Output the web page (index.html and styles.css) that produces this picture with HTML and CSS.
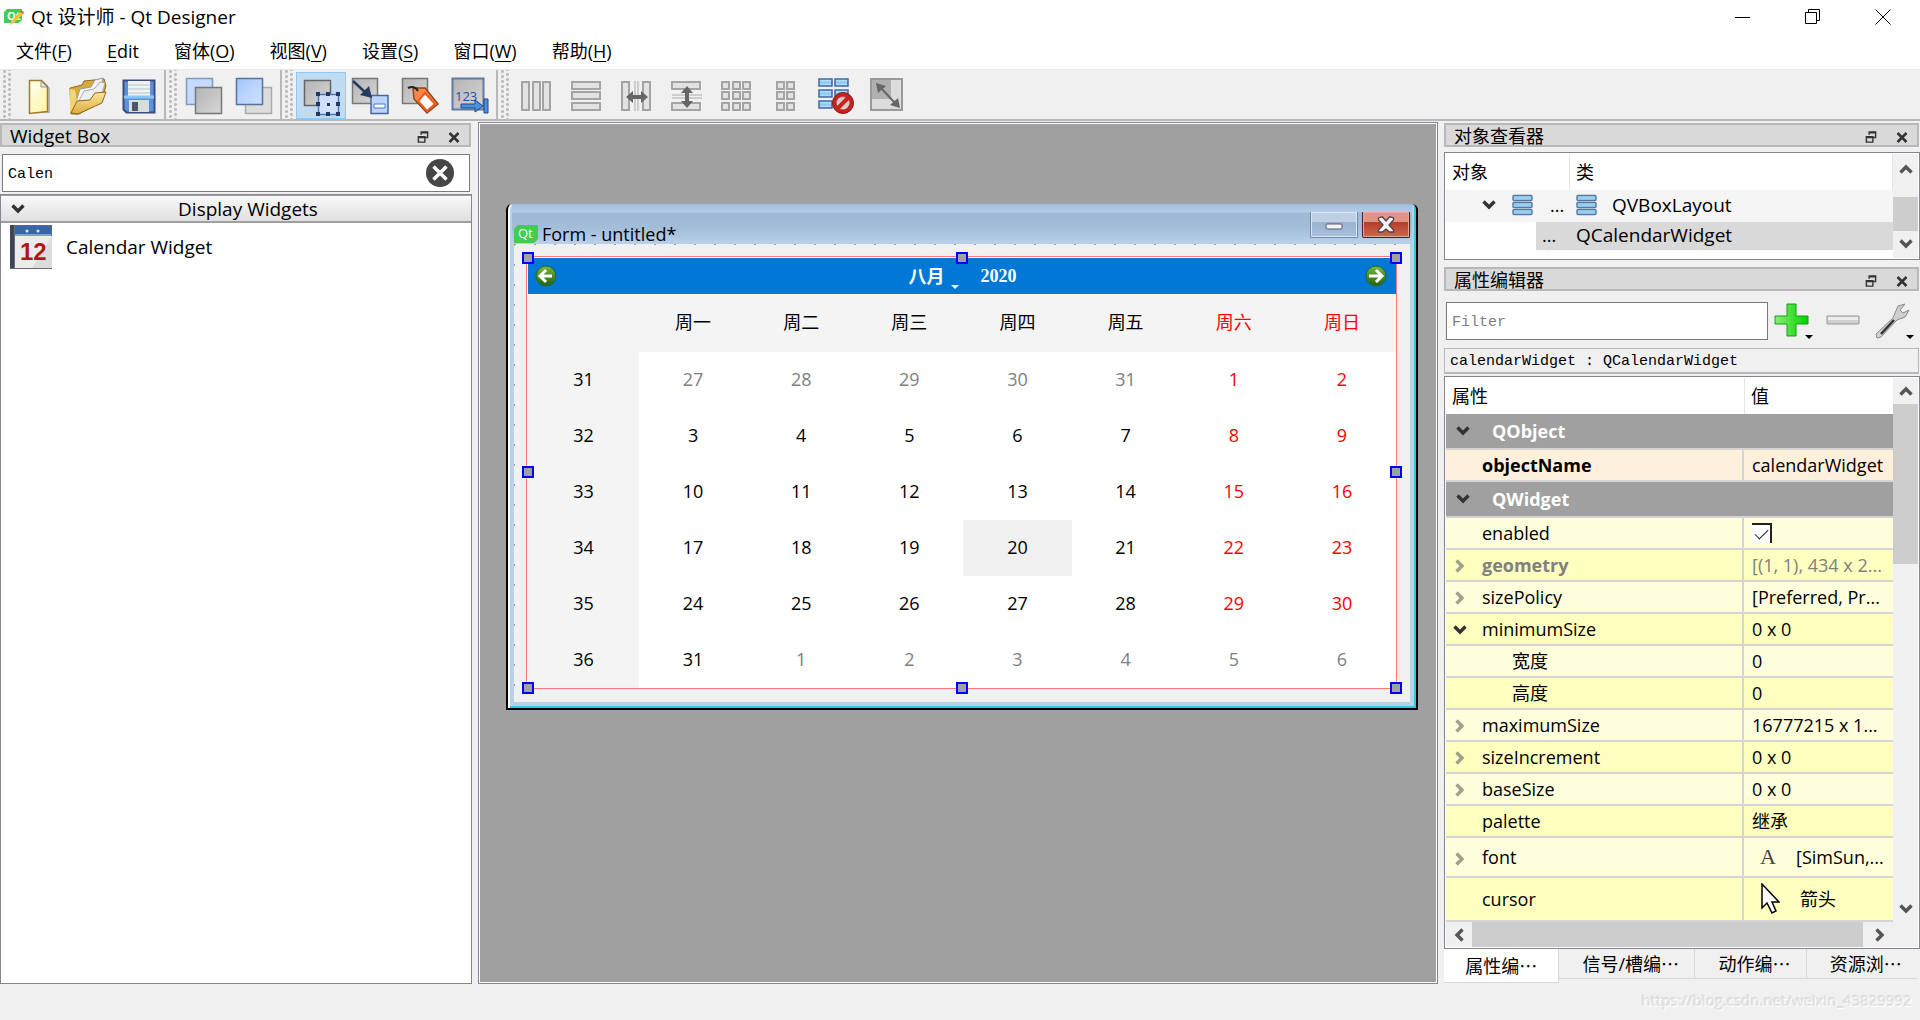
FILE: index.html
```html
<!DOCTYPE html>
<html lang="zh-CN">
<head>
<meta charset="utf-8">
<title>Qt 设计师 - Qt Designer</title>
<link rel="stylesheet" href="styles.css">
</head>
<body>
<svg class="defs" width="0" height="0" aria-hidden="true">
  <defs>
    <linearGradient id="gray" x1="0" y1="0" x2="1" y2="1"><stop offset="0" stop-color="#b4b4b4"/><stop offset="1" stop-color="#d6d6d6"/></linearGradient>
    <linearGradient id="blue" x1="0" y1="0" x2="1" y2="1"><stop offset="0" stop-color="#a4c6fc"/><stop offset="1" stop-color="#d0e2ff"/></linearGradient>
    <linearGradient id="bar" x1="0" y1="0" x2="0" y2="1"><stop offset="0" stop-color="#c8ecff"/><stop offset=".5" stop-color="#8cc8f0"/><stop offset="1" stop-color="#c4e4fa"/></linearGradient>
    <linearGradient id="paper" x1="0" y1="0" x2="1" y2="1"><stop offset="0" stop-color="#fffef0"/><stop offset="1" stop-color="#fff6a0"/></linearGradient>
    <linearGradient id="gold" x1="0" y1="0" x2="0" y2="1"><stop offset="0" stop-color="#fbe5a0"/><stop offset="1" stop-color="#dcae3c"/></linearGradient>
    <linearGradient id="green" x1="0" y1="0" x2="0" y2="1"><stop offset="0" stop-color="#7cb840"/><stop offset="1" stop-color="#1f6310"/></linearGradient>
    <linearGradient id="plus" x1="0" y1="0" x2="1" y2="0"><stop offset="0" stop-color="#8af078"/><stop offset=".5" stop-color="#44e038"/><stop offset="1" stop-color="#00d000"/></linearGradient>
    <symbol id="float" viewBox="0 0 12 14"><path d="M4 4V1h7v6H8M4 2h7" fill="none" stroke="#333" stroke-width="1.500"/><path d="M1 6h7v6H1zM1 7h7" fill="none" stroke="#333" stroke-width="1.500"/></symbol>
    <symbol id="cross" viewBox="0 0 12 12"><path d="M1.500 1.500l9 9M10.500 1.500l-9 9" fill="none" stroke="#333" stroke-width="2.600"/></symbol>
    <symbol id="chevron" viewBox="0 0 14 10"><path d="M1.500 1.500L7 7l5.500-5.500" fill="none" stroke="currentColor" stroke-width="3.400"/></symbol>
    <symbol id="vbox" viewBox="0 0 22 22"><g fill="url(#bar)" stroke="#5078a0" stroke-width="1.400"><rect x="1" y="1.500" width="19" height="5" rx="1"/><rect x="1" y="8.500" width="19" height="5" rx="1"/><rect x="1" y="15.500" width="19" height="5" rx="1"/></g></symbol>
  </defs>
</svg>
<div class="app">
  <header class="titlebar">
    <svg class="app-logo" viewBox="0 0 20 20"><path d="M3 2h15v11l-3 3H0V5z" fill="#41cd52"/><text x="3" y="13" font-size="11" font-weight="bold" fill="#fff" class="logo-text">Qt</text><path d="M6 18l2-5 9-9 3 2-10 10z" fill="#f4c430"/><path d="M6 18l2-5 2 3z" fill="#e8c8a0"/><path d="M16 5l1-2 3 2-1 2z" fill="#e06050"/></svg>
    <h1>Qt 设计师 - Qt Designer</h1>
    <div class="window-buttons">
      <button aria-label="最小化"><svg viewBox="0 0 16 16"><path d="M0 8.500h15" stroke="#000" fill="none"/></svg></button>
      <button aria-label="还原"><svg viewBox="0 0 16 16"><path d="M3.500 3.500v-3h11v11h-3M.500 3.500h11v11H.500z" stroke="#000" fill="none"/></svg></button>
      <button aria-label="关闭"><svg viewBox="0 0 16 16"><path d="M.500 .500l15 15M15.500 .500l-15 15" stroke="#000" fill="none"/></svg></button>
    </div>
  </header>
  <nav class="menubar">
    <button>文件(<u>F</u>)</button><button><u>E</u>dit</button><button>窗体(<u>O</u>)</button><button>视图(<u>V</u>)</button><button>设置(<u>S</u>)</button><button>窗口(<u>W</u>)</button><button>帮助(<u>H</u>)</button>
  </nav>
  <div class="toolbars">
    <div class="toolbar">
      <button aria-label="新建"><svg viewBox="0 0 50 47"><path d="M17 10h13l6 6v25H17z" fill="#888" opacity=".5"/><path d="M15.500 8.500h12l6 6v25l-18 2z" fill="url(#paper)" stroke="#a07c28" stroke-width="1.500"/><path d="M27 9v6h6z" fill="#e8e8e8" stroke="#999"/></svg></button>
      <button aria-label="打开"><svg viewBox="0 0 50 47"><path d="M6 16l12-3 2-4 20-2 2 7-5 16-22 12H7z" fill="#d9a93a" stroke="#8d6a1c"/><path d="M12 30l4-13 11-2 4-7 8-2-3 14-22 12z" fill="#f6f6f6" stroke="#999"/><path d="M14 31l6-12 10-2 6-7 5 1-4 14-22 14z" fill="#eee" stroke="#aaa"/><path d="M6 17l5 1 2 11-4 12-3-1z" fill="#f3d27c"/><path d="M7 41l6-12 13-1 5-7 11-1-4 11-24 11z" fill="url(#gold)" stroke="#8d6a1c"/></svg></button>
      <button aria-label="保存"><svg viewBox="0 0 50 47"><path d="M9.500 8.500h31v32h-28l-3-3z" fill="#5b93d8" stroke="#3a4c80" stroke-width="2"/><path d="M14 9h22v15H14z" fill="#f0f3f4"/><path d="M14 13h22M14 17h22M14 21h22" stroke="#b4c4cc"/><path d="M10 25h30" stroke="#8cc4f8" stroke-width="3"/><path d="M15 28h20v12H15z" fill="#d9dcdc"/><path d="M18 30h6v9h-6z" fill="#4c5560"/></svg></button>
    </div>
    <div class="toolbar">
      <button aria-label="置后"><svg viewBox="0 0 50 47"><path d="M6.500 6.500h26v26h-26z" fill="#c5daff" stroke="#7f97bd" stroke-width="1.500"/><path d="M15.500 15.500h26v26h-26z" fill="url(#gray)" stroke="#777" stroke-width="1.500"/></svg></button>
      <button aria-label="置前"><svg viewBox="0 0 50 47"><path d="M15.500 15.500h26v26h-26z" fill="#dcdcdc" stroke="#aaa" stroke-width="1.500"/><path d="M6.500 6.500h26v26h-26z" fill="url(#blue)" stroke="#54709c" stroke-width="1.500"/></svg></button>
    </div>
    <div class="toolbar">
      <button class="active" aria-label="编辑控件"><svg viewBox="0 0 50 47"><path d="M8.500 8.500h26v25h-26z" fill="url(#gray)" stroke="#666" stroke-width="1.500"/><path d="M22.500 22.500h20v20h-20z" fill="#cfe1ff" stroke="#5575b0" stroke-width="1.500"/><path d="M20 20h4v4h-4zM30 20h4v4h-4zM40 20h4v4h-4zM20 30h4v4h-4zM40 30h4v4h-4zM20 40h4v4h-4zM30 40h4v4h-4zM40 40h4v4h-4zM31 31h3v3h-3z" fill="#1f3666"/></svg></button>
      <button aria-label="编辑信号/槽"><svg viewBox="0 0 50 47"><path d="M6.500 6.500h25v25h-25z" fill="url(#gray)" stroke="#777" stroke-width="1.500"/><path d="M25 23.500h17v18H25z" fill="#bcd5ff" stroke="#4668a0" stroke-width="1.500"/><path d="M28 32h11v4H28z" fill="#fff" stroke="#4a78c8"/><path d="M7 9l13 12" stroke="#253c60" stroke-width="2.500"/><path d="M26 26l-12-3 9-9z" fill="#253c60"/></svg></button>
      <button aria-label="编辑伙伴"><svg viewBox="0 0 50 47"><path d="M6.500 6.500h25v25h-25z" fill="url(#gray)" stroke="#777" stroke-width="1.500"/><path d="M17 16l12 0 13 16-11 9-13-14z" fill="#ff8648" stroke="#8c4620" stroke-width="1.500"/><path d="M29 21l10 11-8 7-9-10z" fill="#fff" stroke="#f05a18" stroke-width="2"/><path d="M12 16c4-2 8-1 10 3" fill="none" stroke="#222" stroke-width="2"/></svg></button>
      <button aria-label="编辑 Tab 顺序"><svg viewBox="0 0 50 47"><path d="M6.500 6.500h31v31h-31z" fill="url(#gray)" stroke="#5f79a4" stroke-width="2"/><text x="9" y="29" font-size="13" fill="#1e54a0" class="logo-text">123</text><path d="M15 32h14v-4l8 6-8 6v-4H15zM38 27h4v14h-4z" fill="#4a90e0" stroke="#1c4a88"/></svg></button>
    </div>
    <div class="toolbar grow">
      <button aria-label="水平布局"><svg viewBox="0 0 50 47"><g class="cell"><rect x="10" y="10" width="7" height="28"/><rect x="21" y="10" width="7" height="28"/><rect x="31" y="10" width="7" height="28"/></g></svg></button>
      <button aria-label="垂直布局"><svg viewBox="0 0 50 47"><g class="cell"><rect x="10" y="10" width="28" height="7"/><rect x="10" y="20" width="28" height="7"/><rect x="10" y="31" width="28" height="7"/></g></svg></button>
      <button aria-label="水平拆分器"><svg viewBox="0 0 50 47"><g class="cell"><rect x="10" y="10" width="7" height="28"/><rect x="31" y="10" width="7" height="28"/></g><path d="M23 9v30M26 9v30" stroke="#aaa"/><path d="M14 25l7-6v4h8v-4l7 6-7 6v-4h-8v4z" fill="#666"/></svg></button>
      <button aria-label="垂直拆分器"><svg viewBox="0 0 50 47"><g class="cell"><rect x="10" y="10" width="28" height="7"/><rect x="10" y="31" width="28" height="7"/></g><path d="M10 23h30M10 26h30" stroke="#aaa"/><path d="M25 14l6 7h-4v8h4l-6 7-6-7h4v-8h-4z" fill="#666"/></svg></button>
      <button aria-label="栅格布局"><svg viewBox="0 0 50 47"><g class="cell"><rect x="10" y="10" width="7" height="7"/><rect x="21" y="10" width="7" height="7"/><rect x="31" y="10" width="7" height="7"/><rect x="10" y="20" width="7" height="7"/><rect x="21" y="20" width="7" height="7"/><rect x="31" y="20" width="7" height="7"/><rect x="10" y="31" width="7" height="7"/><rect x="21" y="31" width="7" height="7"/><rect x="31" y="31" width="7" height="7"/></g></svg></button>
      <button aria-label="表单布局"><svg viewBox="0 0 50 47"><g class="cell"><rect x="15" y="10" width="7" height="7"/><rect x="25" y="10" width="7" height="7"/><rect x="15" y="20" width="7" height="7"/><rect x="25" y="20" width="7" height="7"/><rect x="15" y="31" width="7" height="7"/><rect x="25" y="31" width="7" height="7"/></g></svg></button>
      <button aria-label="打破布局"><svg viewBox="0 0 50 47"><g fill="url(#bar)" stroke="#3c68a4" stroke-width="1.500"><rect x="7" y="7" width="13" height="7"/><rect x="23" y="7" width="13" height="7"/><rect x="7" y="18" width="13" height="7"/><rect x="23" y="18" width="13" height="7"/><rect x="7" y="29" width="13" height="7"/></g><circle cx="31" cy="31" r="8.500" fill="#d8b8b8" fill-opacity=".7" stroke="#c42420" stroke-width="4"/><circle cx="31" cy="31" r="10.500" fill="none" stroke="#8c1818"/><path d="M25 37l12-12" stroke="#c42420" stroke-width="4"/></svg></button>
      <button aria-label="调整大小"><svg viewBox="0 0 50 47"><path d="M9 7h31v31H9z" fill="#dcdcdc" stroke="#999" stroke-width="2"/><path d="M10 8h19v19H10z" fill="#b0b0b0"/><path d="M17 14l17 18" stroke="#666" stroke-width="2"/><path d="M14 11l10 3-8 7zM38 36l-10-3 8-7z" fill="#666"/></svg></button>
    </div>
  </div>

  <main class="workspace">
    <section class="dock">
      <header class="dock-title"><h2>Widget Box</h2><button aria-label="浮动"><svg><use href="#float"/></svg></button><button aria-label="关闭"><svg><use href="#cross"/></svg></button></header>
      <div class="search">
        <input type="text" value="Calen" aria-label="过滤控件">
        <button aria-label="清除"><svg viewBox="0 0 28 28"><circle cx="14" cy="14" r="14" fill="#464646"/><path d="M7.500 7.500l13 13M20.500 7.500l-13 13" stroke="#fff" stroke-width="3.500"/></svg></button>
      </div>
      <div class="widget-list">
        <button class="category"><svg class="chev"><use href="#chevron"/></svg><span>Display Widgets</span></button>
        <div class="widget-item">
          <svg class="cal-icon" viewBox="0 0 44 44"><path d="M0 0h42v44H0z" fill="#6a6a6a"/><path d="M0 0h4v43H0z" fill="#3c4656"/><path d="M5 11h37v32H5z" fill="#ececec"/><path d="M5 1h36v10H5z" fill="#3666b0"/><path d="M5 9h36v2H5z" fill="#7ca0d0"/><circle cx="17" cy="6" r="1.500" fill="#dce8f8"/><circle cx="28" cy="6" r="1.500" fill="#dce8f8"/><path d="M42 11v32H22z" fill="#ccc" opacity=".5"/><text x="10" y="35" font-size="24" font-weight="bold" fill="#b01818" class="cal-number">12</text></svg>
          <span>Calendar Widget</span>
        </div>
      </div>
    </section>

    <section class="mdi">
      <div class="subwindow">
        <div class="sub-title">
          <svg class="qt-logo" viewBox="0 0 24 18"><path d="M4 0h20v14l-4 4H0V4z" fill="#41cd52"/><text x="4" y="13" font-size="13" fill="#fff" class="logo-text">Qt</text></svg>
          <span>Form - untitled*</span>
          <button class="sub-min" aria-label="最小化"><svg viewBox="0 0 18 18"><rect x="1" y="8" width="16" height="5" rx="1" fill="#f4f4f4" stroke="#4c5870"/></svg></button>
          <button class="sub-close" aria-label="关闭"><svg viewBox="0 0 18 18"><path d="M1.500 2l3-1h1L9 5l3.500-4h1l3 1v2L12 9l4.500 5v2h-4L9 13l-3.500 3h-4v-2L6 9 1.500 4z" fill="#f4f4f4" stroke="#504050" stroke-width="1.300"/></svg></button>
        </div>
        <div class="form">
          <div class="calendar">
            <div class="cal-nav">
              <button aria-label="上个月"><svg viewBox="0 0 22 22"><circle cx="11" cy="11" r="10" fill="url(#green)" stroke="#2a6a20"/><path d="M17 11H6M11 5l-6 6 6 6" fill="none" stroke="#fff" stroke-width="3"/></svg></button>
              <div class="cal-date"><button class="month">八月</button><button class="year">2020</button></div>
              <button aria-label="下个月"><svg viewBox="0 0 22 22"><circle cx="11" cy="11" r="10" fill="url(#green)" stroke="#2a6a20"/><path d="M4 11h11M11 5l6 6-6 6" fill="none" stroke="#fff" stroke-width="3"/></svg></button>
            </div>
            <table class="month-grid">
              <colgroup><col class="week-col"><col span="7"></colgroup>
              <thead><tr><th></th><th>周一</th><th>周二</th><th>周三</th><th>周四</th><th>周五</th><th class="we">周六</th><th class="we">周日</th></tr></thead>
              <tbody>
                <tr><th>31</th><td class="out">27</td><td class="out">28</td><td class="out">29</td><td class="out">30</td><td class="out">31</td><td class="we">1</td><td class="we">2</td></tr>
                <tr><th>32</th><td>3</td><td>4</td><td>5</td><td>6</td><td>7</td><td class="we">8</td><td class="we">9</td></tr>
                <tr><th>33</th><td>10</td><td>11</td><td>12</td><td>13</td><td>14</td><td class="we">15</td><td class="we">16</td></tr>
                <tr><th>34</th><td>17</td><td>18</td><td>19</td><td class="today">20</td><td>21</td><td class="we">22</td><td class="we">23</td></tr>
                <tr><th>35</th><td>24</td><td>25</td><td>26</td><td>27</td><td>28</td><td class="we">29</td><td class="we">30</td></tr>
                <tr><th>36</th><td>31</td><td class="out">1</td><td class="out">2</td><td class="out">3</td><td class="out">4</td><td class="out">5</td><td class="out">6</td></tr>
              </tbody>
            </table>
            <i class="grip top left"></i><i class="grip top center"></i><i class="grip top right"></i>
            <i class="grip middle left"></i><i class="grip middle right"></i>
            <i class="grip bottom left"></i><i class="grip bottom center"></i><i class="grip bottom right"></i>
          </div>
        </div>
      </div>
    </section>

    <aside class="side">
      <header class="dock-title"><h2>对象查看器</h2><button aria-label="浮动"><svg><use href="#float"/></svg></button><button aria-label="关闭"><svg><use href="#cross"/></svg></button></header>
      <div class="tree frame">
        <table>
          <colgroup><col class="obj-col"><col></colgroup>
          <thead><tr><th>对象</th><th>类</th></tr></thead>
          <tbody>
            <tr class="layout-row"><td><div><svg class="chev"><use href="#chevron"/></svg><svg class="vbox"><use href="#vbox"/></svg><span>...</span></div></td><td><div><svg class="vbox"><use href="#vbox"/></svg><span>QVBoxLayout</span></div></td></tr>
            <tr class="selected"><td><div><span>...</span></div></td><td>QCalendarWidget</td></tr>
          </tbody>
        </table>
        <div class="vscroll"><button aria-label="向上"><svg class="up"><use href="#chevron"/></svg></button><div class="track"><div class="thumb"></div></div><button aria-label="向下"><svg><use href="#chevron"/></svg></button></div>
      </div>
      <header class="dock-title second"><h2>属性编辑器</h2><button aria-label="浮动"><svg><use href="#float"/></svg></button><button aria-label="关闭"><svg><use href="#cross"/></svg></button></header>
      <div class="filter-row">
        <input type="text" placeholder="Filter" aria-label="Filter">
        <button aria-label="添加动态属性"><svg viewBox="0 0 40 40"><path d="M14 3h9v12h12v8H23v12h-9V23H2v-8h12z" fill="url(#plus)" stroke="#10a010"/><path d="M32 34h8l-4 4z" fill="#000"/></svg></button>
        <button aria-label="删除动态属性"><svg viewBox="0 0 40 40"><path d="M4 15h32v8H4z" fill="#d0d0d0" stroke="#999"/><path d="M5 16h30v3H5z" fill="#eee"/></svg></button>
        <button aria-label="配置"><svg viewBox="0 0 40 40"><path d="M22 12l-2 5L3 33l1 4 4-1 16-17 8-3 4-7-6 3-3-3 5-6-7 2z" fill="#d0d0d0" stroke="#8a8a8a"/><path d="M21 19L8 33" stroke="#333" stroke-width="2.500"/><path d="M33 34h8l-4 4z" fill="#000"/></svg></button>
      </div>
      <div class="object-label">calendarWidget : QCalendarWidget</div>
      <div class="props frame">
        <div class="props-body">
          <table>
            <colgroup><col class="name-col"><col></colgroup>
            <thead><tr><th>属性</th><th>值</th></tr></thead>
            <tbody>
              <tr class="group"><td colspan="2"><div><svg class="chev"><use href="#chevron"/></svg>QObject</div></td></tr>
              <tr class="peach"><td><b>objectName</b></td><td>calendarWidget</td></tr>
              <tr class="group"><td colspan="2"><div><svg class="chev"><use href="#chevron"/></svg>QWidget</div></td></tr>
              <tr><td><label for="enabled">enabled</label></td><td><input id="enabled" type="checkbox" checked></td></tr>
              <tr class="alt dim"><td class="closed"><svg class="chev"><use href="#chevron"/></svg><b>geometry</b></td><td>[(1, 1), 434 x 2...</td></tr>
              <tr><td class="closed"><svg class="chev"><use href="#chevron"/></svg>sizePolicy</td><td>[Preferred, Pr...</td></tr>
              <tr class="alt"><td class="open"><svg class="chev"><use href="#chevron"/></svg>minimumSize</td><td>0 x 0</td></tr>
              <tr><td class="child">宽度</td><td>0</td></tr>
              <tr class="alt"><td class="child">高度</td><td>0</td></tr>
              <tr><td class="closed"><svg class="chev"><use href="#chevron"/></svg>maximumSize</td><td>16777215 x 1...</td></tr>
              <tr class="alt"><td class="closed"><svg class="chev"><use href="#chevron"/></svg>sizeIncrement</td><td>0 x 0</td></tr>
              <tr><td class="closed"><svg class="chev"><use href="#chevron"/></svg>baseSize</td><td>0 x 0</td></tr>
              <tr class="alt"><td>palette</td><td>继承</td></tr>
              <tr class="font-row"><td class="closed"><svg class="chev"><use href="#chevron"/></svg>font</td><td><div class="with-icon"><span class="glyph">A</span><span>[SimSun,...</span></div></td></tr>
              <tr class="alt cursor-row"><td>cursor</td><td><div class="with-icon"><svg class="arrow" viewBox="0 0 20 32"><path d="M2 1v24l5-5 5 10 4-2-4-9h7z" fill="#fff" stroke="#000" stroke-width="1.500"/></svg><span>箭头</span></div></td></tr>
            </tbody>
          </table>
          <div class="hscroll"><button aria-label="向左"><svg class="lt"><use href="#chevron"/></svg></button><div class="track"><div class="thumb"></div></div><button aria-label="向右"><svg class="rt"><use href="#chevron"/></svg></button></div>
        </div>
        <div class="vscroll"><button aria-label="向上"><svg class="up"><use href="#chevron"/></svg></button><div class="track"><div class="thumb"></div></div><button aria-label="向下"><svg><use href="#chevron"/></svg></button></div>
      </div>
      <div class="tabs" role="tablist"><button role="tab" class="current">属性编⋯</button><button role="tab">信号/槽编⋯</button><button role="tab">动作编⋯</button><button role="tab">资源浏⋯</button></div>
    </aside>
  </main>
  <footer class="statusbar">https://blog.csdn.net/weixin_43829992</footer>
</div>
</body>
</html>
```
FILE: styles.css
```css
* { box-sizing: border-box; }
body { margin: 0; background: #f0f0f0; color: #000; font: 18px/24px "Open Sans", "Noto Sans CJK SC", sans-serif; }
button { margin: 0; padding: 0; border: 0; background: none; color: inherit; font: inherit; }
input { font: inherit; }
svg { display: block; flex: none; }
h1, h2 { margin: 0; font: inherit; }
table { border-collapse: separate; border-spacing: 0; table-layout: fixed; width: 100%; }
th { font-weight: normal; }
td, th { padding: 0; white-space: nowrap; }
.defs { position: absolute; }
.logo-text { font-family: "Open Sans", sans-serif; }
.cal-number { font-family: "Liberation Sans", sans-serif; }

.app { display: flex; flex-direction: column; min-height: 100vh; }

/* title and menu */
.titlebar { display: flex; align-items: center; height: 34px; padding: 0 2px 0 4px; background: #fff; }
.app-logo { width: 20px; height: 20px; margin-right: 7px; }
.titlebar h1 { flex: 1; font-size: 19px; }
.window-buttons { display: flex; }
.window-buttons button { display: grid; place-items: center; width: 70px; height: 34px; }
.window-buttons svg { width: 16px; height: 16px; }
.menubar { display: flex; gap: 3px; height: 36px; background: #fff; border-bottom: 1px solid #e8e8e8; }
.menubar button { padding: 0 16px 2px; }
.menubar u { text-underline-offset: 3px; }

/* toolbars */
.toolbars { display: flex; height: 51px; }
.toolbar { display: flex; padding: 2px 0 0 14px; border-right: 2px solid #b8b8b8; border-bottom: 2px solid #b8b8b8;
  background: radial-gradient(circle, #bbb 1px, transparent 2px) 2px 4px / 5px 5px repeat-y, radial-gradient(circle, #bbb 1px, transparent 2px) 7px 2px / 5px 5px repeat-y; }
.toolbar.grow { flex: 1; border-right: 0; }
.toolbar button { width: 50px; height: 47px; }
.toolbar svg { width: 50px; height: 47px; }
.toolbar .active { background: #c0dcf3; box-shadow: inset 0 0 0 1px #90c8f6; }
.cell rect { fill: #e2e2e2; stroke: #a4a4a4; stroke-width: 2px; }

/* docks */
.workspace { flex: 1; display: grid; grid-template-columns: 472px minmax(0, 1fr) 476px; gap: 6px; padding-top: 1px; }
.dock, .side { display: flex; flex-direction: column; }
.dock-title { display: flex; align-items: center; height: 24px; margin: 1px 1px 0 0; padding: 2px 0 0 8px; border: 2px solid #b8b8b8; background: #d9d9d9; }
.dock-title h2 { flex: 1; }
.dock .dock-title h2 { font-size: 19px; }
.dock-title button { display: grid; place-items: center; width: 31px; height: 20px; padding-top: 2px; }
.dock-title svg { width: 12px; height: 13px; }
.search { display: flex; align-items: center; height: 38px; margin: 7px 2px 2px; border: 1px solid #7a7a7a; background: #fff; }
.search input { flex: 1; min-width: 0; border: 0; outline: 0; padding: 4px 5px 0; background: none; font: 15px/24px "Liberation Mono", monospace; }
.search button { padding-right: 15px; }
.search svg { width: 28px; height: 28px; }
.widget-list { flex: 1; border: 1px solid #828790; background: #fff; }
.category { position: relative; display: flex; align-items: center; width: 100%; height: 28px; padding: 0 0 0 10px; border-top: 1px solid #a0a0a0; border-bottom: 2px solid #a0a0a0; background: linear-gradient(#f8f8f8, #e0e0e0); font-size: 19px; }
.category span { flex: 1; text-align: center; }
.chev { width: 14px; height: 10px; color: #333; }
.widget-item { display: flex; align-items: center; gap: 12px; padding: 2px 9px; font-size: 19px; }
.cal-icon { width: 44px; height: 44px; }

/* form canvas */
.mdi { position: relative; border: 1px solid #828790; outline: 1px solid #fff; outline-offset: -2px; background: #a0a0a0; overflow: hidden; }
.subwindow { position: absolute; left: 27px; top: 81px; width: 912px; border: solid #000; border-width: 0 2px 2px; border-radius: 6px 6px 0 0; background: #b9d1ea; box-shadow: inset 2px 0 #fff, inset -2px -2px #30c8e0; padding: 0 6px 6px; }
.sub-title { display: flex; align-items: flex-end; height: 40px; margin: 0 -2px; padding: 0 2px; background: linear-gradient(#a0bcda 0, #b4cce6 8px, #9fbad6 9px, #a4bdd9 24px, #b9d1ea 40px); }
.sub-title span { flex: 1; height: 22px; padding-left: 4px; }
.qt-logo { width: 24px; height: 18px; margin-bottom: 1px; overflow: visible; }
.sub-title button { display: grid; place-items: center; align-self: center; width: 48px; height: 26px; margin-left: 4px; margin-top: 2px; border: 1px solid #6f87a8; border-top: 0; border-radius: 0 0 2px 2px; box-shadow: inset 0 0 0 1px #dbe8f6; }
.sub-title button svg { width: 18px; height: 18px; }
.sub-min { background: linear-gradient(#bdd0e6 40%, #9ab2cf 41%, #a8c0dc); }
.sub-title .sub-close { border-color: #501820; box-shadow: inset 0 0 0 1px #e8a898; background: linear-gradient(#e09488 40%, #b83c28 41%, #cc6850); }
.form { padding: 12px 13px 13px 12px; background: linear-gradient(90deg, transparent 18px, #a0a0a0 18px) 2px 0 / 20px 1px repeat-x, linear-gradient(transparent 18px, #a0a0a0 18px) 0 2px / 1px 20px repeat-y, #f0f0f0; }
.calendar { position: relative; padding: 1px 0 0 1px; border: 1px solid #ff7878; background: #fff; }
.cal-nav { display: flex; align-items: center; height: 36px; padding: 0 9px 0 7px; background: #0078d7; color: #fff; font-weight: bold; }
.cal-nav svg { width: 22px; height: 22px; }
.cal-date { flex: 1; display: flex; justify-content: center; gap: 36px; padding-left: 3px; }
.month { position: relative; }
.month::after { content: ""; position: absolute; right: -14px; bottom: -1px; border: 4px solid transparent; border-top-color: #fff; border-bottom: 0; }
.year { font-family: "Liberation Serif", serif; }
.month-grid { text-align: center; }
.week-col { width: 111px; }
.month-grid th, .month-grid td { height: 56px; padding-bottom: 2px; }
.month-grid th { background: #f4f4f4; }
.month-grid thead th { height: 58px; padding-bottom: 3px; }
.month-grid .we { color: #f00; }
.month-grid .out { color: #808080; }
.month-grid .today { background: #f0f0f0; }
.grip { position: absolute; width: 12px; height: 12px; border: 2px solid #00f; background: #a0a0a0; }
.grip.top { top: -5px; } .grip.middle { top: calc(50% - 7px); } .grip.bottom { bottom: -6px; }
.grip.left { left: -5px; } .grip.center { left: calc(50% - 6px); } .grip.right { right: -6px; }

/* shared list chrome */
.frame { display: flex; border: 1px solid #828790; background: #fff; padding: 1px; }
.vscroll { display: flex; flex: none; flex-direction: column; width: 25px; background: #f0f0f0; }
.vscroll button, .hscroll button { display: grid; place-items: center; color: #555; }
.vscroll button { height: 26px; }
.vscroll svg, .hscroll svg { width: 14px; height: 10px; }
.vscroll .up { transform: rotate(180deg); }
.lt { transform: rotate(90deg); }
.rt { transform: rotate(-90deg); }
.track { flex: 1; }
.thumb { background: #cdcdcd; }

/* object inspector */
.tree { height: 108px; margin-top: 5px; }
.tree table { flex: 1; align-self: flex-start; }
.tree th { height: 36px; padding-left: 6px; border-right: 1px solid #e5e5e5; text-align: left; }
.obj-col { width: 124px; }
.tree td { height: 32px; padding: 0 0 2px 6px; }
.tree td:last-child { font-size: 19px; }
.tree td div { display: flex; align-items: center; }
.tree .layout-row td { background: #f5f5f5; }
.tree .layout-row td:first-child { padding-left: 36px; }
.layout-row td:first-child div { gap: 16px; }
.layout-row td:last-child div { gap: 14px; }
.vbox { width: 22px; height: 22px; }
.tree .selected td { height: 28px; background: #d9d9d9; }
.tree .selected td:first-child { padding-left: 96px; background: linear-gradient(90deg, #fff 90px, #d9d9d9 90px); }
.tree .vscroll button { height: 32px; }
.tree .vscroll button:last-child { height: 28px; }
.tree .thumb { height: 34px; margin-top: 12px; }

/* property editor */
.second { margin-top: 7px; }
.filter-row { display: flex; align-items: center; height: 38px; margin: 11px 2px 8px; }
.filter-row input { flex: 1; min-width: 0; height: 38px; padding: 2px 5px 0; border: 1px solid #7a7a7a; background: #fff; font: 15px/24px "Liberation Mono", monospace; }
.filter-row input::placeholder { color: #808080; }
.filter-row button { width: 50px; padding-left: 5px; }
.filter-row svg { width: 40px; height: 40px; overflow: visible; }
.object-label { height: 26px; margin: 0 1px 2px 0; padding-left: 5px; border: 1px solid #b8b8b8; border-bottom-width: 2px; font: 15px/26px "Liberation Mono", monospace; }
.props { flex: 1; }
.props-body { flex: 1; min-width: 0; display: flex; flex-direction: column; }
.props th { height: 36px; padding-left: 6px; text-align: left; }
.props th:last-child { border-left: 1px solid #e5e5e5; }
.name-col { width: 298px; }
.props td { position: relative; height: 32px; padding-left: 36px; border-bottom: 2px solid #d4d4d4; border-right: 2px solid #d4d4d4; background: #ffffdc; }
.props td:last-child { padding-left: 8px; border-right: 0; }
.props .alt td { background: #ffffbf; }
.props .peach td { background: #fff0dc; }
.props .dim { color: #808080; }
.props .group td { height: 36px; padding-left: 10px; background: #a0a0a0; color: #fff; font-weight: bold; }
.group div { display: flex; align-items: center; gap: 22px; }
.props td.child { padding-left: 66px; }
.props td > .chev { position: absolute; left: 7px; top: 11px; }
.props .closed .chev { color: #a0a08c; transform: rotate(-90deg); }
.props .font-row td { height: 40px; }
.font-row .closed > .chev { top: 16px; }
.props .cursor-row td { height: 44px; }
.with-icon { display: flex; align-items: center; gap: 20px; padding-left: 8px; }
.glyph { width: 16px; font-family: "Liberation Serif", serif; font-size: 22px; color: #444; }
.arrow { width: 20px; height: 32px; }
.props input { appearance: none; display: block; width: 20px; height: 20px; margin: 0; background: #fff; border-top: 2px solid #222; border-right: 2px solid #222; }
.props input::after { content: ""; display: block; width: 12px; height: 6px; margin: 4px 0 0 3px; border: solid #222; border-width: 0 0 1px 1px; transform: rotate(-45deg); }
.props .vscroll { padding-bottom: 25px; }
.props .vscroll .thumb { height: 160px; }
.hscroll { display: flex; height: 25px; margin-top: auto; background: #f0f0f0; }
.hscroll button { width: 26px; }
.hscroll .track { margin-right: 4px; }
.hscroll .thumb { height: 25px; }
.tabs { display: flex; height: 35px; margin-right: 3px; }
.tabs button { flex: auto; height: 30px; padding-left: 8px; border-right: 1px solid #d9d9d9; border-bottom: 1px solid #d9d9d9; }
.tabs .current { height: 34px; padding: 0 6px; background: #fff; }
.tabs button:last-child { border-right: 0; }
.statusbar { height: 36px; padding: 4px 8px 0 0; text-align: right; font-size: 15px; color: #e4e4e4; text-shadow: 1px 1px #fff, -1px -1px 1px #d4d4d4; }
```
